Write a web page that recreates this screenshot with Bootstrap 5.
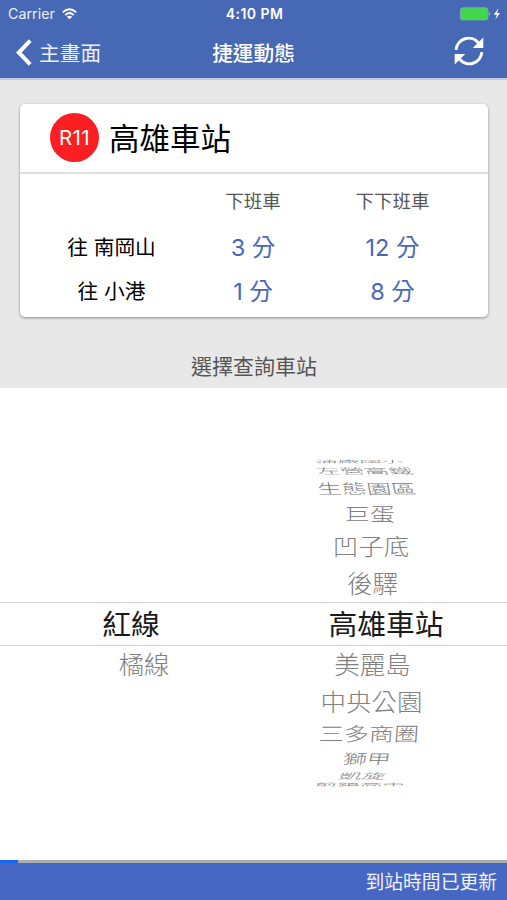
<!DOCTYPE html>
<html lang="zh-Hant">
<head>
<meta charset="utf-8">
<meta name="viewport" content="width=device-width, initial-scale=1">
<title>捷運動態</title>
<link href="https://cdn.jsdelivr.net/npm/bootstrap@5.3.0/dist/css/bootstrap.min.css" rel="stylesheet">
<style>
body{font-family:Inter,"Noto Sans CJK TC",sans-serif;color:#000;background:#fff}
.app{height:900px;overflow:hidden}
.topbar{height:80px;background:#4768b5;border-bottom:2px solid #c3cbe2}
.status{height:27px;padding:0 6px 0 8px;font-size:14.2px;line-height:27px}
.status .carrier{opacity:.9;letter-spacing:.05px}
.status .clock{font-size:14px;letter-spacing:.45px}
.side{flex:1 1 0}
.titlebar{height:51px;padding:0 23px 0 16px;font-size:20.7px;line-height:30px}
.titlebar .heading{font-weight:500;margin-left:7px;padding-top:2px}
.board{height:308px;background:#e8e8e8;padding:24px 19px 0 20px}
.station{height:213px;border-radius:5px;box-shadow:0 1px 3px rgba(0,0,0,.4)}
.station-head{height:70px;padding-left:30px;border-bottom:2px solid #dedede}
.code{width:49px;height:49px;background:#fb1f24;font-size:20.5px;letter-spacing:.3px;margin-top:-2px;padding-top:3px}
.name{font-size:30.5px;line-height:40px;margin-left:10px;padding-top:1px}
.times{display:grid;grid-template-columns:183px 100px 179px;grid-template-rows:54px 40px 48px;text-align:center;align-items:center}
.times .cap{font-size:18.5px;color:#555;padding-top:2px}
.times .dir{font-size:20.7px}
.times .min{font-size:23.5px;color:#4767bd}
.prompt{height:71px;padding-top:28px;font-size:21px;color:#555}
.picker{height:472px}
.wheel-left{width:259px}
.wheel-row{display:flex;justify-content:center;align-items:center;white-space:nowrap;color:#808080;font-size:25.5px;font-weight:300;line-height:1;font-family:"Noto Sans CJK TC",sans-serif}
.wheel-row span{display:block;margin-top:-4px}
.band{height:44px;border-top:1.5px solid #d3d3d3;border-bottom:1.5px solid #d3d3d3}
.band .wheel-row{height:41px;font-size:28.8px;font-weight:400;color:#1a1a1a}
.band .wheel-row span{margin-top:0}
.progress-line{height:3px;background:#a9afae}
.progress-line div{width:18px;height:3px;background:#1665ec}
.foot{height:37px;background:#4767c5;padding:3px 10px 0 0;font-size:18.8px}
</style>
<script src="https://cdn.jsdelivr.net/npm/bootstrap@5.3.0/dist/js/bootstrap.bundle.min.js"></script>
</head>
<body>
<div class="app d-flex flex-column">
  <header class="topbar text-white">
    <div class="status d-flex align-items-center">
      <div class="side d-flex align-items-center"><span class="carrier">Carrier</span>
        <svg style="margin-left:7px" width="15" height="12" viewBox="0 0 15 12" fill="none" stroke="#fff" stroke-width="1.8"><path d="M.8 4.4Q7.5-1.9 14.2 4.4M3.2 7.1Q7.5 3 11.8 7.1"/><path d="M7.5 11.3 4.8 8.8Q7.5 6.5 10.2 8.8Z" fill="#fff" stroke="none"/></svg>
      </div>
      <div class="clock fw-semibold">4:10 PM</div>
      <div class="side d-flex justify-content-end align-items-center">
        <svg width="42" height="14" viewBox="0 0 42 14"><rect x="1.3" y=".8" width="27.6" height="12.2" rx="2.5" fill="#43d84b" stroke="#6eafa0"/><path d="M30 5q1.7 1.9 0 3.8Z" fill="#dbe5f5"/><path d="M39.5 1.2 34.8 7.7h3L36.3 12.5 41 6.1h-3Z" fill="#fff"/></svg>
      </div>
    </div>
    <div class="titlebar d-flex align-items-center">
      <div class="side d-flex align-items-center"><svg width="17" height="27" viewBox="0 0 17 27" fill="none" stroke="#fff" stroke-width="4"><path d="M14.2 1.7 2.8 13.5 14.2 25.3"/></svg><span style="margin-left:6px;padding-top:2px;opacity:.9">主畫面</span></div>
      <div class="heading">捷運動態</div>
      <div class="side d-flex justify-content-end"><svg width="30" height="30" viewBox="0 0 30 30" style="margin-top:-3px"><path d="M2.2 13.8A12.4 12.4 0 0 1 24.4 7M27.8 16.2A12.4 12.4 0 0 1 5.6 23" fill="none" stroke="#fff" stroke-width="3"/><path d="M29.3 1.5V12H18.8ZM.7 28.5V18H11.2Z" fill="#fff"/></svg></div>
    </div>
  </header>

  <section class="board">
    <div class="station bg-white">
      <div class="station-head d-flex align-items-center">
        <div class="code rounded-circle text-white d-flex justify-content-center align-items-center">R11</div>
        <div class="name">高雄車站</div>
      </div>
      <div class="times">
        <div></div><div class="cap">下班車</div><div class="cap">下下班車</div>
        <div class="dir">往 南岡山</div><div class="min">3 分</div><div class="min">12 分</div>
        <div class="dir">往 小港</div><div class="min">1 分</div><div class="min">8 分</div>
      </div>
    </div>
    <div class="prompt d-flex justify-content-center align-items-center">選擇查詢車站</div>
  </section>

  <main class="picker d-flex flex-column">
    <div class="d-flex flex-column align-items-end justify-content-end" style="height:214px">
      <div class="d-flex flex-column" style="width:248px">
        <div class="wheel-row" style="height:6px;margin-right:47px"><span style="font-size:22px;margin-top:-2px;transform:scaleY(.16)">油廠國小</span></div>
        <div class="wheel-row" style="height:14px;margin-right:39px"><span style="font-size:24px;margin-top:-2px;transform:scaleY(.34) skewX(12deg)">左營高鐵</span></div>
        <div class="wheel-row" style="height:20px;margin-right:34px"><span style="font-size:24.7px;margin-top:-2px;transform:scaleY(.57) skewX(6deg)">生態園區</span></div>
        <div class="wheel-row" style="height:29px;margin-right:26px"><span style="font-size:25px;margin-top:0;transform:scaleY(.74)">巨蛋</span></div>
        <div class="wheel-row" style="height:37px;margin-right:24px"><span style="transform:scaleY(.9)">凹子底</span></div>
        <div class="wheel-row" style="height:37px;margin-right:21px"><span>後驛</span></div>
      </div>
    </div>
    <div class="band d-flex">
      <div class="wheel-left wheel-row" style="padding-left:3px"><span>紅線</span></div>
      <div class="flex-fill wheel-row" style="padding-left:6px"><span>高雄車站</span></div>
    </div>
    <div class="d-flex">
      <div class="wheel-left"><div class="wheel-row" style="height:38px;padding-left:29px"><span>橘線</span></div></div>
      <div class="d-flex flex-column" style="width:248px">
        <div class="wheel-row" style="height:38px;margin-right:21px"><span>美麗島</span></div>
        <div class="wheel-row" style="height:38px;margin-right:23px"><span style="transform:scaleY(.92)">中央公園</span></div>
        <div class="wheel-row" style="height:26px;margin-right:28px"><span style="font-size:25px;margin-top:-5px;transform:scaleY(.77) skewX(-3deg)">三多商圈</span></div>
        <div class="wheel-row" style="height:24px;margin-right:33px"><span style="font-size:24px;transform:scaleY(.57) skewX(-6deg)">獅甲</span></div>
        <div class="wheel-row" style="height:10px;margin-right:42px"><span style="font-size:23.5px;margin-top:-2px;transform:scaleY(.34) skewX(-12deg)">凱旋</span></div>
        <div class="wheel-row" style="height:5px;margin-right:46px"><span style="font-size:22.5px;margin-top:-1px;transform:scaleY(.15)">前鎮高中</span></div>
      </div>
    </div>
  </main>

  <div class="progress-line mt-auto"><div></div></div>
  <footer class="foot text-white d-flex justify-content-end align-items-center"><span style="opacity:.92">到站時間已更新</span></footer>
</div>
</body>
</html>
